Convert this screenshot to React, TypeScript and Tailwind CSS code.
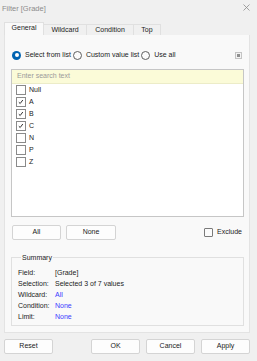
import React from "react";

const items = [
  { label: "Null", checked: false },
  { label: "A", checked: true },
  { label: "B", checked: true },
  { label: "C", checked: true },
  { label: "N", checked: false },
  { label: "P", checked: false },
  { label: "Z", checked: false },
];

const summary = [
  { label: "Field:", value: "[Grade]", link: false },
  { label: "Selection:", value: "Selected 3 of 7 values", link: false },
  { label: "Wildcard:", value: "All", link: true },
  { label: "Condition:", value: "None", link: true },
  { label: "Limit:", value: "None", link: true },
];

const Radio = ({ checked, label }: { checked?: boolean; label: string }) => (
  <div className="flex items-center">
    {checked ? (
      <span className="w-[9px] h-[9px] rounded-full bg-[#0063b1] flex items-center justify-center">
        <span className="w-[4px] h-[4px] rounded-full bg-white" />
      </span>
    ) : (
      <span className="w-[9px] h-[9px] rounded-full border border-[#5f5f5f] bg-[#fbfbfb]" />
    )}
    <span className="ml-[4px]">{label}</span>
  </div>
);

const CheckBox = ({ checked }: { checked?: boolean }) => (
  <span className="w-[10px] h-[10px] border border-[#8a8a8a] bg-white flex items-start justify-start">
    {checked && (
      <svg width="6" height="6" viewBox="0 0 6 6" className="ml-[1px] mt-[1px]">
        <polyline points="0.8,3.2 2.2,4.5 4.8,1" fill="none" stroke="#333" strokeWidth="1" />
      </svg>
    )}
  </span>
);

const Btn = ({ children, w }: { children: React.ReactNode; w: string }) => (
  <button className={`${w} h-[15px] bg-[#fdfdfd] border border-[#d4d4d4] rounded-[2px] text-[#1b1b1b] flex items-center justify-center`}>
    {children}
  </button>
);

export default function App() {
  return (
    <div className="w-[257px] h-[361px] bg-[#f0f0f0] font-['Liberation_Sans',Arial,sans-serif] text-[7px] text-[#1b1b1b] flex flex-col">
      {/* title */}
      <div className="h-[22px] flex items-start justify-between pl-[2px] pr-[7px] pt-[3px]">
        <span className="text-[#8c8c8c] text-[7.5px]">Filter [Grade]</span>
        <svg width="7" height="7" viewBox="0 0 7 7" className="mt-[1px]">
          <path d="M0.5 0.5 L6.5 6.5 M6.5 0.5 L0.5 6.5" stroke="#8c8c8c" strokeWidth="0.8" />
        </svg>
      </div>

      {/* tabs */}
      <div className="flex items-end h-[13px] ml-[4px]">
        <div className="w-[40px] h-[13px] bg-[#f9f9f9] border-l border-t border-r border-[#e0e0e0] flex items-center justify-center pb-[1px]">
          General
        </div>
        <div className="w-[43px] h-[11px] border-t border-r border-[#e0e0e0] flex items-center justify-center">Wildcard</div>
        <div className="w-[47px] h-[11px] border-t border-r border-[#e0e0e0] flex items-center justify-center">Condition</div>
        <div className="w-[27px] h-[11px] border-t border-r border-[#e0e0e0] flex items-center justify-center">Top</div>
      </div>

      {/* panel */}
      <div className="mx-[4px] w-[246px] h-[298px] bg-[#f9f9f9] border border-t-0 border-[#e3e3e3] pl-[6px] pr-[6px] flex flex-col">
        <div className="mt-[15px] h-[10px] flex items-center pl-[1px]">
          <Radio checked label="Select from list" />
          <div className="ml-[2px]">
            <Radio label="Custom value list" />
          </div>
          <div className="ml-[2px]">
            <Radio label="Use all" />
          </div>
          <span className="ml-auto mr-[1px] w-[7px] h-[7px] border border-[#c4c4c4] bg-[#f3f3f3] flex items-center justify-center">
            <span className="w-[3px] h-[3px] bg-[#8f8f8f]" />
          </span>
        </div>

        {/* list */}
        <div className="mt-[9px] w-[233px] h-[148px] border border-[#c6c6c6] bg-white flex flex-col">
          <div className="h-[14px] bg-[#fbfbd8] border-b border-[#ececc8] flex items-center pl-[5px] text-[#9a9a9a]">
            Enter search text
          </div>
          <div className="flex flex-col pl-[4px]">
            {items.map((it) => (
              <div key={it.label} className="h-[12px] flex items-center">
                <CheckBox checked={it.checked} />
                <span className="ml-[3px] text-[#222]">{it.label}</span>
              </div>
            ))}
          </div>
        </div>

        {/* all / none / exclude */}
        <div className="mt-[8px] flex items-center pl-[1px] w-[233px]">
          <Btn w="w-[49px]">All</Btn>
          <div className="ml-[5px]">
            <Btn w="w-[50px]">None</Btn>
          </div>
          <div className="ml-auto mr-[2px] flex items-center">
            <span className="w-[9px] h-[9px] border border-[#7a7a7a] rounded-[1px] bg-[#fbfbfb]" />
            <span className="ml-[4px]">Exclude</span>
          </div>
        </div>

        {/* summary */}
        <fieldset className="mt-[13px] w-[233px] border border-[#e0e0e0] pl-[6px] pt-[6px] pb-[2px]">
          <legend className="ml-[3px] px-[1px] leading-[9px]">Summary</legend>
          {summary.map((r) => (
            <div key={r.label} className="h-[11px] flex items-center">
              <span className="w-[37px]">{r.label}</span>
              <span className={r.link ? "text-[#3b3bff]" : ""}>{r.value}</span>
            </div>
          ))}
        </fieldset>
      </div>

      {/* bottom buttons */}
      <div className="mt-[6px] flex items-center pl-[4px] pr-[7px]">
        <Btn w="w-[49px]">Reset</Btn>
        <div className="ml-auto flex gap-[6px]">
          <Btn w="w-[49px]">OK</Btn>
          <Btn w="w-[49px]">Cancel</Btn>
          <Btn w="w-[49px]">Apply</Btn>
        </div>
      </div>
    </div>
  );
}
